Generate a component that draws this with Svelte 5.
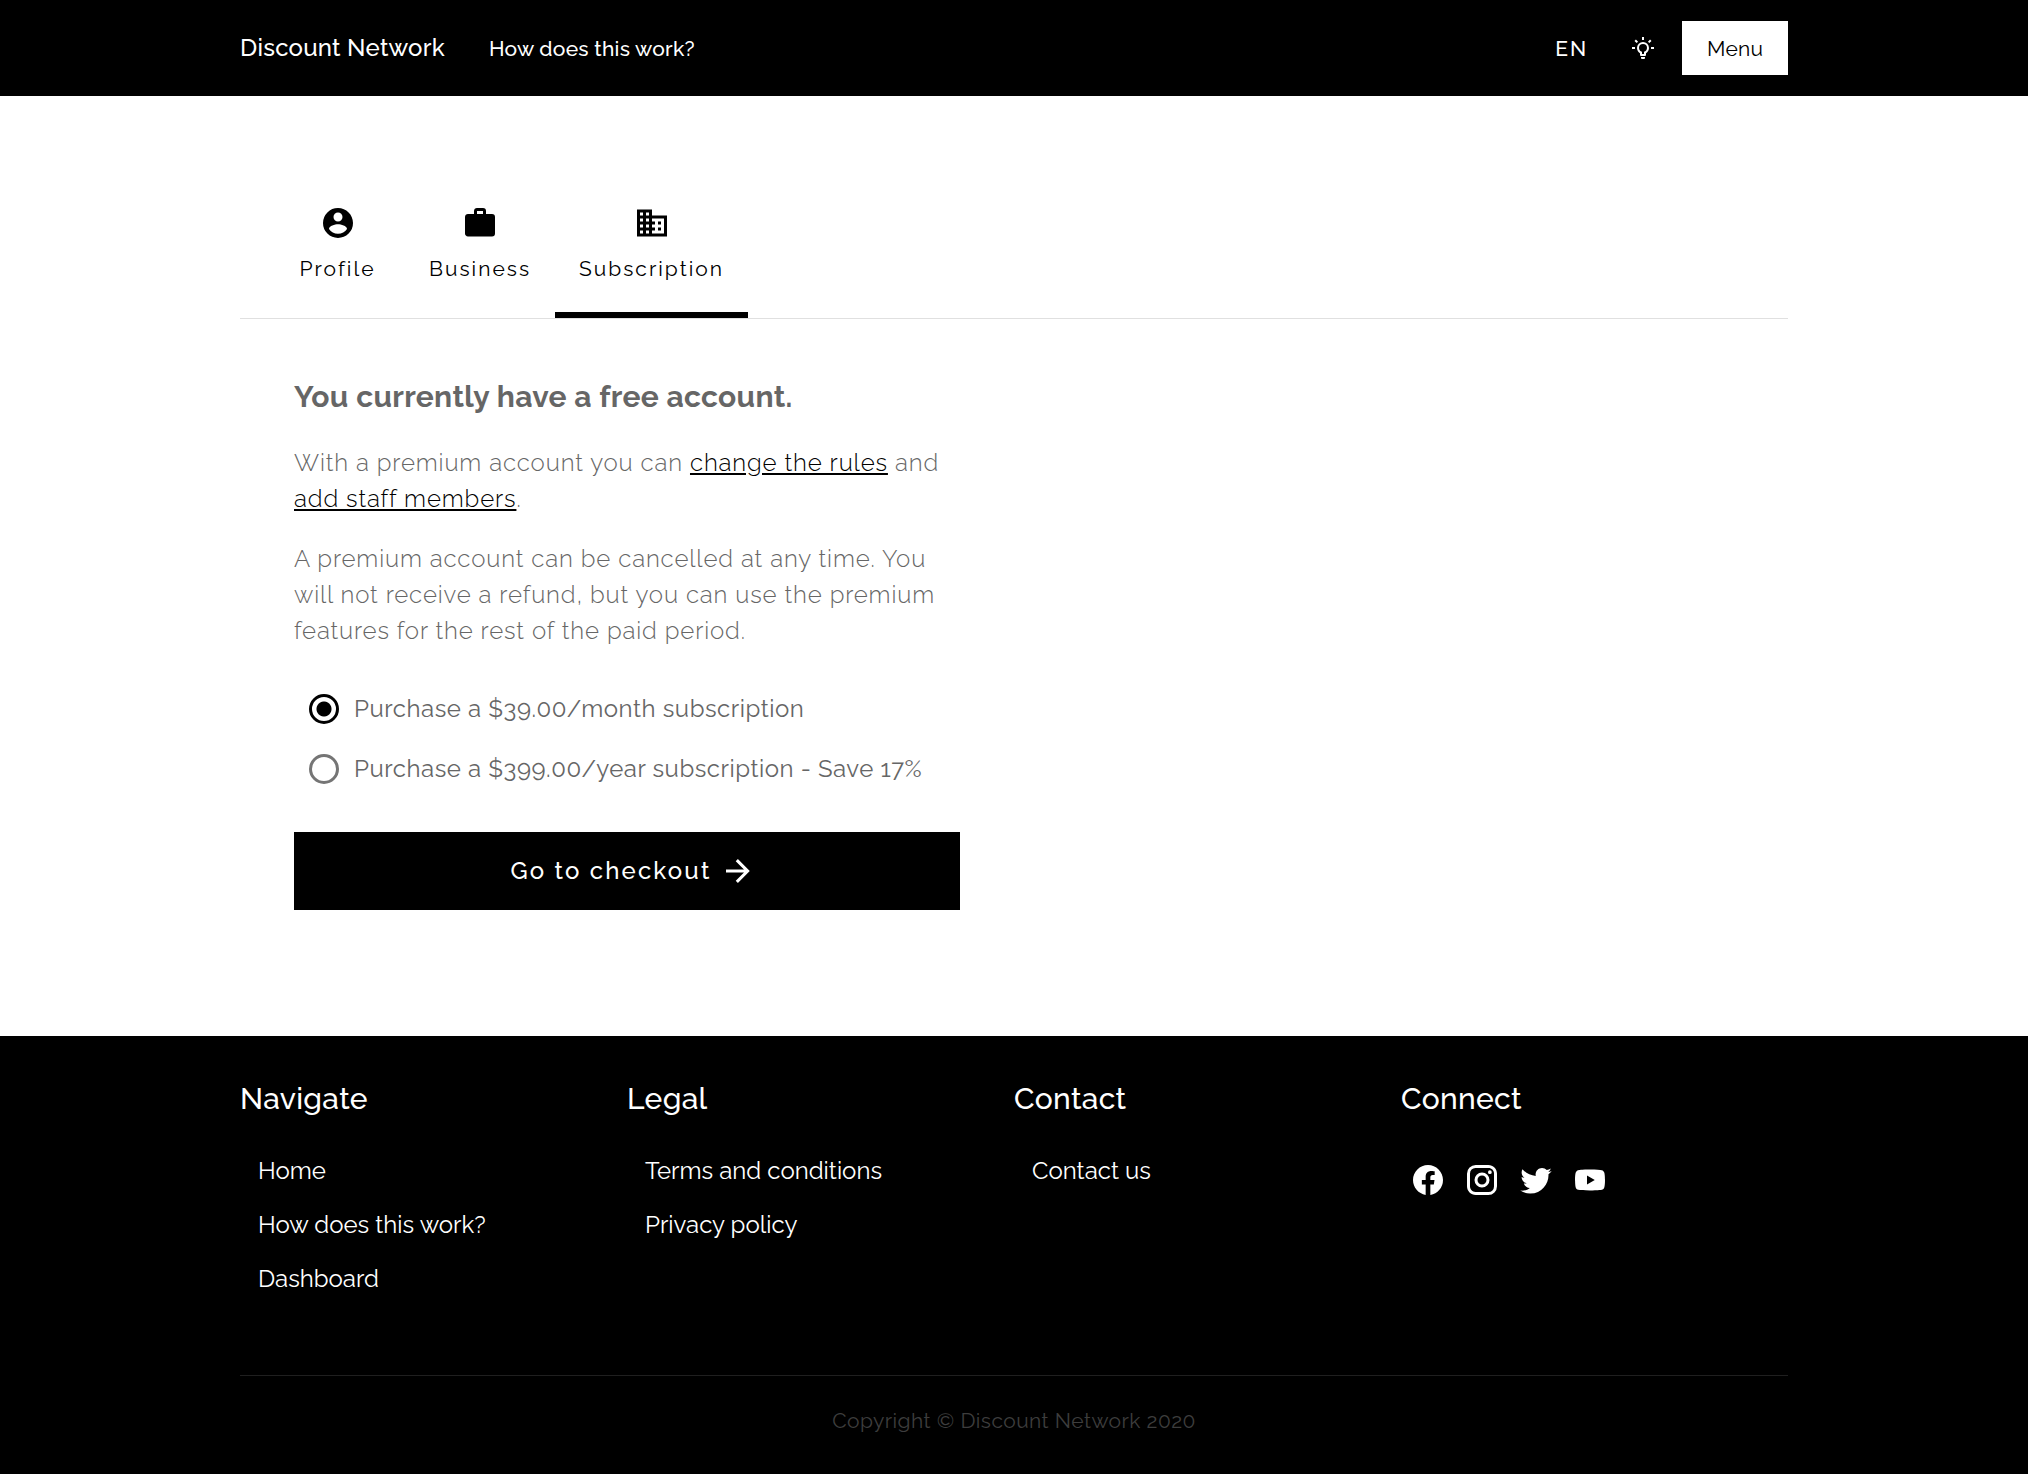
<script>
  const icons = {
    account:
      'M12,19.2C9.5,19.2 7.29,17.92 6,16C6.03,14 10,12.9 12,12.9C14,12.9 17.97,14 18,16C16.71,17.92 14.5,19.2 12,19.2M12,5A3,3 0 0,1 15,8A3,3 0 0,1 12,11A3,3 0 0,1 9,8A3,3 0 0,1 12,5M12,2A10,10 0 0,0 2,12A10,10 0 0,0 12,22A10,10 0 0,0 22,12C22,6.47 17.5,2 12,2Z',
    briefcase:
      'M10,2H14A2,2 0 0,1 16,4V6H20A2,2 0 0,1 22,8V19A2,2 0 0,1 20,21H4C2.89,21 2,20.1 2,19V8C2,6.89 2.89,6 4,6H8V4C8,2.89 8.89,2 10,2M14,6V4H10V6H14Z',
    domain:
      'M18,15H16V17H18M18,11H16V13H18M20,19H12V17H14V15H12V13H14V11H12V9H20M10,7H8V5H10M10,11H8V9H10M10,15H8V13H10M10,19H8V17H10M6,7H4V5H6M6,11H4V9H6M6,15H4V13H6M6,19H4V17H6M12,7V3H2V21H22V7H12Z',
    bulb:
      'M20,11H23V13H20V11M1,11H4V13H1V11M13,1V4H11V1H13M4.92,3.5L7.05,5.64L5.63,7.05L3.5,4.93L4.92,3.5M16.95,5.63L19.07,3.5L20.5,4.93L18.37,7.05L16.95,5.63M12,6A6,6 0 0,1 18,12C18,14.22 16.79,16.16 15,17.2V19A1,1 0 0,1 14,20H10A1,1 0 0,1 9,19V17.2C7.21,16.16 6,14.22 6,12A6,6 0 0,1 12,6M14,21V22A1,1 0 0,1 13,23H11A1,1 0 0,1 10,22V21H14M11,18H13V15.87C14.73,15.43 16,13.86 16,12A4,4 0 0,0 12,8A4,4 0 0,0 8,12C8,13.86 9.27,15.43 11,15.87V18Z',
    arrow:
      'M4,11V13H16L10.5,18.5L11.92,19.92L19.84,12L11.92,4.08L10.5,5.5L16,11H4Z'
  };

  const tabs = [
    { id: 'profile', label: 'Profile', icon: icons.account },
    { id: 'business', label: 'Business', icon: icons.briefcase },
    { id: 'subscription', label: 'Subscription', icon: icons.domain }
  ];

  const plans = [
    { id: 'month', label: 'Purchase a $39.00/month subscription' },
    { id: 'year', label: 'Purchase a $399.00/year subscription - Save 17%' }
  ];

  const columns = [
    { title: 'Navigate', links: ['Home', 'How does this work?', 'Dashboard'] },
    { title: 'Legal', links: ['Terms and conditions', 'Privacy policy'] },
    { title: 'Contact', links: ['Contact us'] }
  ];

  const social = [
    {
      name: 'Facebook',
      icon: 'M12 2.04C6.5 2.04 2 6.53 2 12.06C2 17.06 5.66 21.21 10.44 21.96V14.96H7.9V12.06H10.44V9.85C10.44 7.34 11.93 5.96 14.22 5.96C15.31 5.96 16.45 6.15 16.45 6.15V8.62H15.19C13.95 8.62 13.56 9.39 13.56 10.18V12.06H16.34L15.89 14.96H13.56V21.96A10 10 0 0 0 22 12.06C22 6.53 17.5 2.04 12 2.04Z'
    },
    {
      name: 'Instagram',
      icon: 'M7.8,2H16.2C19.4,2 22,4.6 22,7.8V16.2A5.8,5.8 0 0,1 16.2,22H7.8C4.6,22 2,19.4 2,16.2V7.8A5.8,5.8 0 0,1 7.8,2M7.6,4A3.6,3.6 0 0,0 4,7.6V16.4C4,18.39 5.61,20 7.6,20H16.4A3.6,3.6 0 0,0 20,16.4V7.6C20,5.61 18.39,4 16.4,4H7.6M17.25,5.5A1.25,1.25 0 0,1 18.5,6.75A1.25,1.25 0 0,1 17.25,8A1.25,1.25 0 0,1 16,6.75A1.25,1.25 0 0,1 17.25,5.5M12,7A5,5 0 0,1 17,12A5,5 0 0,1 12,17A5,5 0 0,1 7,12A5,5 0 0,1 12,7M12,9A3,3 0 0,0 9,12A3,3 0 0,0 12,15A3,3 0 0,0 15,12A3,3 0 0,0 12,9Z'
    },
    {
      name: 'Twitter',
      icon: 'M22.46,6C21.69,6.35 20.86,6.58 20,6.69C20.88,6.16 21.56,5.32 21.88,4.31C21.05,4.81 20.13,5.16 19.16,5.36C18.37,4.5 17.26,4 16,4C13.65,4 11.73,5.92 11.73,8.29C11.73,8.63 11.77,8.96 11.84,9.27C8.28,9.09 5.11,7.38 3,4.79C2.63,5.42 2.42,6.16 2.42,6.94C2.42,8.43 3.17,9.75 4.33,10.5C3.62,10.5 2.96,10.3 2.38,10C2.38,10 2.38,10 2.38,10.03C2.38,12.11 3.86,13.85 5.82,14.24C5.46,14.34 5.08,14.39 4.69,14.39C4.42,14.39 4.15,14.36 3.89,14.31C4.43,16 6,17.26 7.89,17.29C6.43,18.45 4.58,19.13 2.56,19.13C2.22,19.13 1.88,19.11 1.54,19.07C3.44,20.29 5.7,21 8.12,21C16,21 20.33,14.46 20.33,8.79C20.33,8.6 20.33,8.42 20.32,8.23C21.16,7.63 21.88,6.87 22.46,6Z'
    },
    {
      name: 'YouTube',
      icon: 'M10,15L15.19,12L10,9V15M21.56,7.17C21.69,7.64 21.78,8.27 21.84,9.07C21.91,9.87 21.94,10.56 21.94,11.16L22,12C22,14.19 21.84,15.8 21.56,16.83C21.31,17.73 20.73,18.31 19.83,18.56C19.36,18.69 18.5,18.78 17.18,18.84C15.88,18.91 14.69,18.94 13.59,18.94L12,19C7.81,19 5.2,18.84 4.17,18.56C3.27,18.31 2.69,17.73 2.44,16.83C2.31,16.36 2.22,15.73 2.16,14.93C2.09,14.13 2.06,13.44 2.06,12.84L2,12C2,9.81 2.16,8.2 2.44,7.17C2.69,6.27 3.27,5.69 4.17,5.44C4.64,5.31 5.5,5.22 6.82,5.16C8.12,5.09 9.31,5.06 10.41,5.06L12,5C16.19,5 18.8,5.16 19.83,5.44C20.73,5.69 21.31,6.27 21.56,7.17Z'
    }
  ];

  let activeTab = $state('subscription');
  let plan = $state('month');
</script>

{#snippet icon(path, small = false)}
  <svg class="icon" class:small viewBox="0 0 24 24" aria-hidden="true"><path d={path} /></svg>
{/snippet}

<div class="page">
  <header class="topbar">
    <div class="container bar">
      <nav class="primary" aria-label="Main">
        <a class="brand" href="#home">Discount Network</a>
        <a class="how" href="#how">How does this work?</a>
      </nav>
      <div class="actions">
        <button class="lang" type="button">EN</button>
        <button class="theme" type="button" aria-label="Toggle theme">{@render icon(icons.bulb, true)}</button>
        <button class="menu" type="button">Menu</button>
      </div>
    </div>
  </header>

  <main class="container main">
    <div class="tabs" role="tablist">
      {#each tabs as tab}
        <button
          class="tab"
          class:active={activeTab === tab.id}
          type="button"
          role="tab"
          aria-selected={activeTab === tab.id}
          onclick={() => (activeTab = tab.id)}
        >
          {@render icon(tab.icon)}
          <span>{tab.label}</span>
        </button>
      {/each}
    </div>

    <section class="panel">
      <h1>You currently have a free account.</h1>
      <p>
        With a premium account you can <a href="#rules">change the rules</a> and
        <a href="#staff">add staff members</a>.
      </p>
      <p>
        A premium account can be cancelled at any time. You will not receive a refund, but you can use
        the premium features for the rest of the paid period.
      </p>
      <div class="plans" role="radiogroup" aria-label="Subscription plan">
        {#each plans as option}
          <label>
            <input type="radio" name="plan" value={option.id} bind:group={plan} />
            <span>{option.label}</span>
          </label>
        {/each}
      </div>
      <button class="checkout" type="button">
        <span>Go to checkout</span>
        {@render icon(icons.arrow)}
      </button>
    </section>
  </main>

  <footer class="footer">
    <div class="container">
      <div class="columns">
        {#each columns as column}
          <nav aria-label={column.title}>
            <h2>{column.title}</h2>
            <ul>
              {#each column.links as link}
                <li><a href="#top">{link}</a></li>
              {/each}
            </ul>
          </nav>
        {/each}
        <div>
          <h2>Connect</h2>
          <div class="social">
            {#each social as item}
              <a href="#top" aria-label={item.name}>{@render icon(item.icon)}</a>
            {/each}
          </div>
        </div>
      </div>
      <p class="copyright">Copyright © Discount Network 2020</p>
    </div>
  </footer>
</div>

<style>
  :global(body) {
    margin: 0;
  }

  .page {
    display: flex;
    flex-direction: column;
    min-height: 100vh;
    background: #fff;
    color: #000;
    font-family: Raleway, Lato, 'Open Sans', sans-serif;
    font-size: 24px;
    line-height: 36px;
  }

  .page *,
  .page {
    box-sizing: border-box;
  }

  button {
    margin: 0;
    padding: 0;
    border: 0;
    background: none;
    color: inherit;
    font: inherit;
    cursor: pointer;
  }

  a {
    color: inherit;
    text-decoration: none;
  }

  .container {
    width: 100%;
    max-width: 1596px;
    margin: 0 auto;
    padding: 0 24px;
  }

  .icon {
    display: block;
    width: 36px;
    height: 36px;
    fill: currentColor;
  }

  .icon.small {
    width: 24px;
    height: 24px;
  }

  .topbar {
    background: #000;
    color: #fff;
  }

  .bar {
    display: flex;
    align-items: center;
    height: 96px;
  }

  .primary {
    display: flex;
    align-items: baseline;
    gap: 44px;
    font-weight: 500;
    letter-spacing: 0.01em;
  }

  .how {
    font-size: 21px;
  }

  .actions {
    display: flex;
    align-items: center;
    margin-left: auto;
    font-size: 21px;
  }

  .lang {
    padding: 2px 23px 0;
    font-weight: 500;
    letter-spacing: 0.09em;
  }

  .theme {
    padding: 6px 27px 6px 20px;
  }

  .menu {
    min-width: 106px;
    height: 54px;
    padding-top: 2px;
    background: #fff;
    color: #000;
    letter-spacing: 0.01em;
  }

  .main {
    flex: 1;
    padding-top: 90px;
    padding-bottom: 126px;
  }

  .tabs {
    display: flex;
    padding-left: 30px;
    border-bottom: 1px solid #e0e0e0;
  }

  .tab {
    display: flex;
    flex-direction: column;
    align-items: center;
    gap: 10px;
    min-width: 135px;
    height: 132px;
    padding: 19px 24px 0;
    border-bottom: 6px solid transparent;
    font-size: 21px;
    letter-spacing: 2px;
  }

  .tab.active {
    border-bottom-color: #000;
  }

  .panel {
    max-width: 720px;
    margin-left: 54px;
    padding-top: 60px;
    padding-right: 54px;
    color: #666;
  }

  h1 {
    margin: 0 0 30px;
    font-size: 30px;
    font-weight: 700;
    line-height: 36px;
    letter-spacing: 0.01em;
  }

  .panel p {
    margin: 0 0 24px;
    font-weight: 300;
    letter-spacing: 0.036em;
  }

  .panel p a {
    color: #000;
    text-decoration: underline;
  }

  .plans {
    display: flex;
    flex-direction: column;
    gap: 24px;
    padding: 18px 0 45px 15px;
    letter-spacing: 0.022em;
  }

  .plans label {
    display: flex;
    align-items: center;
    gap: 15px;
  }

  .plans input {
    appearance: none;
    width: 30px;
    height: 30px;
    margin: 0;
    border: 3px solid #757575;
    border-radius: 50%;
  }

  .plans input:checked {
    border-color: #000;
    background: radial-gradient(circle, #000 7px, transparent 8px);
  }

  .checkout {
    display: flex;
    align-items: center;
    justify-content: center;
    gap: 8px;
    width: 100%;
    height: 78px;
    padding-left: 12px;
    background: #000;
    color: #fff;
    font-weight: 500;
    letter-spacing: 0.09em;
  }

  .footer {
    background: #000;
    color: #fff;
  }

  .columns {
    display: grid;
    grid-template-columns: repeat(4, 1fr);
    padding: 45px 0 69px;
    border-bottom: 1px solid #1f1f1f;
  }

  h2 {
    margin: 0 0 27px;
    font-size: 30px;
    font-weight: 500;
    line-height: 36px;
    letter-spacing: 0.01em;
  }

  ul {
    margin: 0;
    padding: 0 0 0 18px;
    list-style: none;
  }

  li {
    height: 54px;
    padding-top: 9px;
  }

  .social {
    display: flex;
    gap: 18px;
    padding: 18px 9px;
  }

  .copyright {
    margin: 0;
    padding: 27px 0 36px;
    color: #3d3d3d;
    font-size: 21px;
    text-align: center;
    letter-spacing: 0.02em;
  }
</style>
